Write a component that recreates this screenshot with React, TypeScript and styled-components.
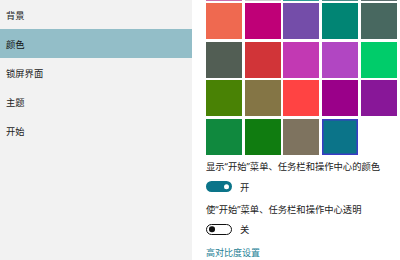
import styled, { createGlobalStyle } from 'styled-components'

const GlobalStyle = createGlobalStyle`
  html, body {
    margin: 0;
    padding: 0;
    background: #fff;
  }
  body {
    font-family: "Noto Sans", "Noto Sans CJK SC", sans-serif;
    overflow: hidden;
  }
`

const Page = styled.div`
  display: flex;
  width: 400px;
  height: 260px;
  overflow: hidden;
`

const Sidebar = styled.nav`
  width: 192px;
  flex-shrink: 0;
  background: #f2f2f2;
  display: flex;
  flex-direction: column;
`

const NavItem = styled.div<{ active?: boolean }>`
  height: 29px;
  display: flex;
  align-items: center;
  padding-left: 6px;
  font-size: 9.3px;
  color: ${(p) => (p.active ? '#111' : '#222')};
  background: ${(p) => (p.active ? '#93bec8' : 'transparent')};
`

const Content = styled.main`
  flex: 1;
  padding-left: 14px;
  display: flex;
  flex-direction: column;
  align-items: flex-start;
`

const Swatches = styled.div`
  display: grid;
  grid-template-columns: repeat(5, 36px);
  grid-auto-rows: 36px;
  gap: 2.6px 2.67px;
  margin-top: -35.5px;
`

const Swatch = styled.div<{ color: string; selected?: boolean }>`
  background: ${(p) => p.color};
  box-shadow: ${(p) => (p.selected ? 'inset 0 0 0 1.5px #3b3cc4' : 'none')};
`

const Label = styled.div<{ top: number }>`
  margin-top: ${(p) => p.top}px;
  font-size: 9.3px;
  line-height: 12px;
  color: #222;
  white-space: nowrap;
`

const ToggleRow = styled.div`
  display: flex;
  align-items: center;
  margin-top: 6.5px;
  gap: 8px;
  font-size: 9.3px;
  color: #222;
`

const Track = styled.div<{ on?: boolean }>`
  position: relative;
  box-sizing: border-box;
  width: 26px;
  height: 11px;
  border-radius: 6px;
  background: ${(p) => (p.on ? '#0b7489' : '#fff')};
  border: ${(p) => (p.on ? 'none' : '1.5px solid #111')};
`

const Knob = styled.span<{ on?: boolean }>`
  position: absolute;
  top: 50%;
  width: 5.5px;
  height: 5.5px;
  border-radius: 50%;
  transform: translateY(-50%);
  background: ${(p) => (p.on ? '#fff' : '#111')};
  ${(p) => (p.on ? 'right: 3px;' : 'left: 2px;')}
`

const Link = styled.a`
  margin-top: 11px;
  font-size: 9px;
  line-height: 12px;
  color: #1e7f95;
  text-decoration: none;
`

const navItems = ['背景', '颜色', '锁屏界面', '主题', '开始']

const colors = [
  '#c96fae', '#d0cfd0', '#2d9c96', '#4a8c88', '#5e7070',
  '#ef6950', '#bf0077', '#744da9', '#018574', '#486860',
  '#525e54', '#d13438', '#c239b3', '#b146c2', '#00cc6a',
  '#498205', '#847545', '#ff4343', '#9a0089', '#881798',
  '#10893e', '#107c10', '#7e735f', '#0b7489',
]

export default function App() {
  return (
    <Page>
      <GlobalStyle />
      <Sidebar>
        {navItems.map((item) => (
          <NavItem key={item} active={item === '颜色'}>
            {item}
          </NavItem>
        ))}
      </Sidebar>
      <Content>
        <Swatches>
          {colors.map((c, i) => (
            <Swatch key={i} color={c} selected={i === colors.length - 1} />
          ))}
        </Swatches>
        <Label top={6.5}>显示“开始”菜单、任务栏和操作中心的颜色</Label>
        <ToggleRow>
          <Track on>
            <Knob on />
          </Track>
          开
        </ToggleRow>
        <Label top={10}>使“开始”菜单、任务栏和操作中心透明</Label>
        <ToggleRow>
          <Track>
            <Knob />
          </Track>
          关
        </ToggleRow>
        <Link href="#">高对比度设置</Link>
      </Content>
    </Page>
  )
}
